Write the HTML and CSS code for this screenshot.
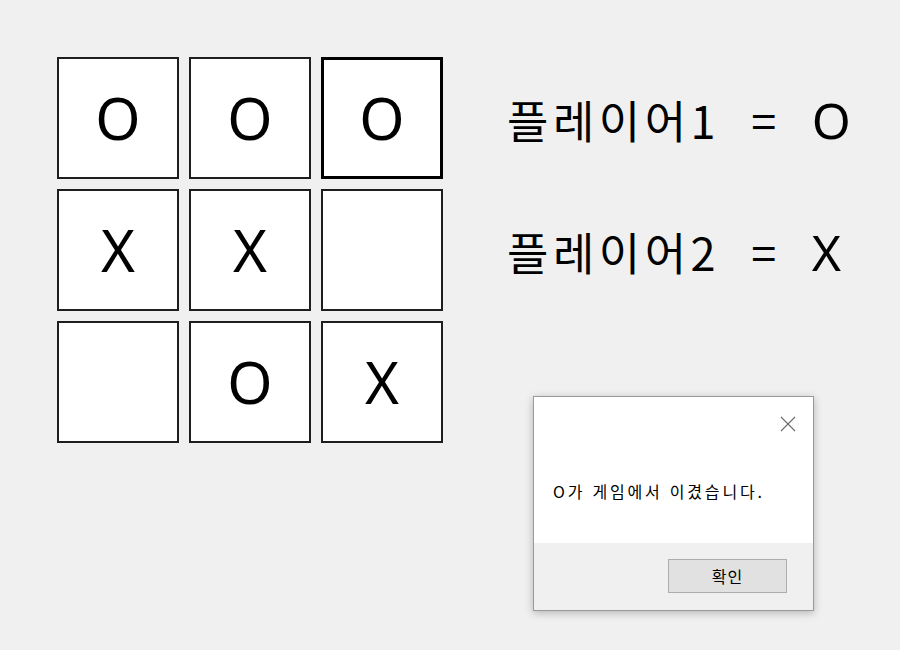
FILE: index.html
```html
<!DOCTYPE html>
<html lang="ko">
<head>
<meta charset="utf-8">
<title>틱택토</title>
<link rel="stylesheet" href="styles.css">
</head>
<body>
<div class="app">
  <div class="board">
    <div class="cell">O</div>
    <div class="cell">O</div>
    <div class="cell focused">O</div>
    <div class="cell">X</div>
    <div class="cell">X</div>
    <div class="cell"></div>
    <div class="cell"></div>
    <div class="cell">O</div>
    <div class="cell">X</div>
  </div>
  <div class="players">
    <div class="player">플레이어1 = <span class="mark">O</span></div>
    <div class="player">플레이어2 = <span class="mark">X</span></div>
  </div>
</div>

<div class="dialog">
  <div class="dialog-body">
    <div class="close">
      <svg width="16" height="16" viewBox="0 0 16 16"><path d="M1 1 L15 15 M15 1 L1 15" stroke="#6b6b6b" stroke-width="1.1" fill="none"/></svg>
    </div>
    <div class="message">O가 게임에서 이겼습니다.</div>
  </div>
  <div class="dialog-footer">
    <button class="ok">확인</button>
  </div>
</div>
</body>
</html>
```

FILE: styles.css
```css
html, body {
  margin: 0;
  padding: 0;
  background: #f0f0f0;
  width: 900px;
  height: 650px;
  overflow: hidden;
  font-family: "Noto Sans CJK KR", "Noto Sans", sans-serif;
  color: #000;
}

.app {
  display: flex;
  padding: 57px 0 0 57px;
}

.board {
  display: grid;
  grid-template-columns: repeat(3, 122px);
  grid-template-rows: repeat(3, 122px);
  gap: 10px;
}

.cell {
  box-sizing: border-box;
  background: #fff;
  border: 2px solid #1e1e1e;
  display: flex;
  align-items: center;
  justify-content: center;
  font-family: "Noto Sans", sans-serif;
  font-size: 58px;
  line-height: 1;
}

.cell.focused {
  border: 3px solid #000;
}

.players {
  display: grid;
  grid-template-rows: repeat(2, 122px);
  row-gap: 10px;
  margin-left: 64px;
}

.player {
  display: flex;
  align-items: baseline;
  align-self: center;
  padding-top: 4px;
  font-size: 45px;
  font-weight: 400;
  line-height: 1;
  letter-spacing: 4.5px;
  word-spacing: 14px;
  white-space: pre;
}

.mark {
  font-family: "Noto Sans", sans-serif;
  font-size: 50px;
  letter-spacing: 0;
}

.dialog {
  position: absolute;
  left: 533px;
  top: 396px;
  width: 281px;
  height: 215px;
  box-sizing: border-box;
  border: 1px solid #9a9a9a;
  background: #f0f0f0;
  box-shadow: 0 2px 8px rgba(0, 0, 0, 0.25);
  display: flex;
  flex-direction: column;
}

.dialog-body {
  background: #fff;
  height: 146px;
  position: relative;
}

.close {
  position: absolute;
  right: 17px;
  top: 16px;
  width: 16px;
  height: 16px;
}

.message {
  padding: 85px 0 0 19px;
  font-size: 16px;
  line-height: 18px;
  letter-spacing: 2.8px;
}

.dialog-footer {
  flex: 1;
  display: flex;
  justify-content: flex-end;
  align-items: flex-start;
  padding: 16px 26px 0 0;
}

.ok {
  width: 119px;
  height: 34px;
  box-sizing: border-box;
  border: 1px solid #adadad;
  background: #e1e1e1;
  font-family: "Noto Sans CJK KR", sans-serif;
  font-size: 16px;
  letter-spacing: 1px;
  color: #000;
  padding: 0;
}
```
